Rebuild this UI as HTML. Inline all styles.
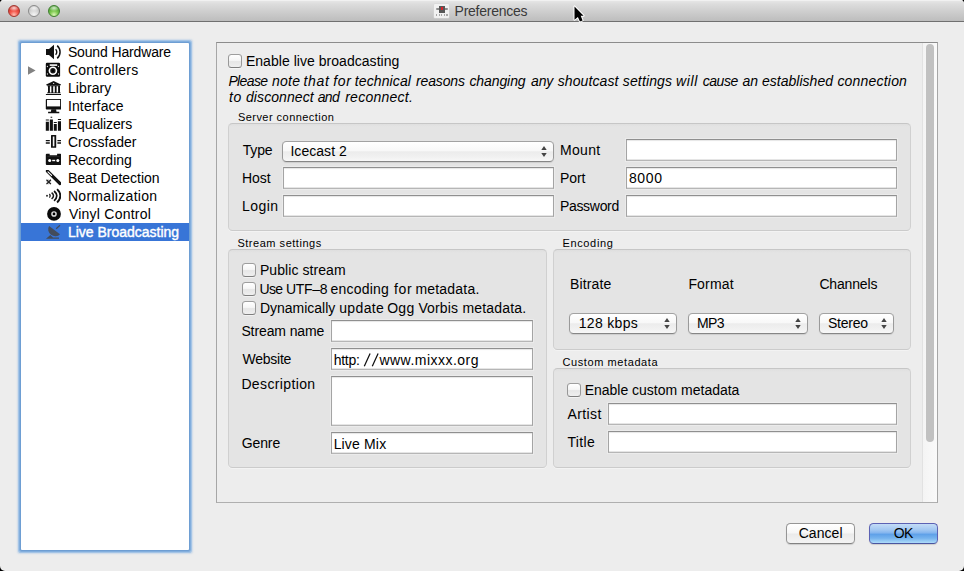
<!DOCTYPE html>
<html>
<head>
<meta charset="utf-8">
<title>Preferences</title>
<style>
html,body{margin:0;padding:0;}
body{width:964px;height:571px;overflow:hidden;background:#000;font-family:"Liberation Sans",sans-serif;font-size:14px;color:#000;}
#win{position:absolute;left:0;top:0;width:964px;height:571px;background:#ededed;border-radius:4px 4px 5px 5px;overflow:hidden;}
#tb{position:absolute;left:0;top:0;width:964px;height:21px;background:linear-gradient(#e9e9e9 0,#dddddd 18%,#cecece 55%,#bdbdbd 100%);border-bottom:1px solid #707070;box-shadow:inset 0 1px 0 #f1f1f1;}
.tl{position:absolute;top:5px;width:12px;height:12px;border-radius:50%;box-sizing:border-box;}
.t{position:absolute;white-space:nowrap;line-height:16px;height:16px;}
.inp{position:absolute;box-sizing:border-box;height:22px;background:#fff;border:1px solid #a4a4a4;border-top-color:#8f8f8f;border-bottom-color:#b6b6b6;box-shadow:inset 0 1px 1px rgba(0,0,0,.10),inset 0 -1px 0 rgba(0,0,0,.10),0 0 0 1px rgba(255,255,255,.25);}
.gb{position:absolute;box-sizing:border-box;background:linear-gradient(#dfdfdf,#e4e4e4 3px,#e4e4e4);border:1px solid #d0d0d0;border-top-color:#c6c6c6;border-bottom-color:#cbcbcb;border-radius:4.5px;box-shadow:0 1px 0 rgba(255,255,255,.35);}
.cb{position:absolute;width:14px;height:14px;box-sizing:border-box;border:1px solid #989898;border-bottom-color:#7e7e7e;border-top-color:#9e9e9e;border-radius:3.5px;background:linear-gradient(#ffffff,#f6f6f6 45%,#e6e6e6 55%,#efefef);box-shadow:0 1px 0 rgba(255,255,255,.5);}
.combo{position:absolute;box-sizing:border-box;height:21px;border:1px solid #9a9a9a;border-top-color:#a2a2a2;border-bottom-color:#868686;border-radius:4.5px;background:linear-gradient(#ffffff,#f8f8f8 45%,#ececec 52%,#f1f1f1 80%,#f8f8f8);box-shadow:0 1px 1px rgba(0,0,0,.10);}
.combo svg{position:absolute;right:6px;top:4px;}
.btn{position:absolute;box-sizing:border-box;height:21px;border:1px solid #959595;border-bottom-color:#828282;border-radius:4.5px;background:linear-gradient(#ffffff,#f6f6f6 48%,#eaeaea 52%,#f4f4f4);box-shadow:0 1px 1px rgba(0,0,0,.14);}
#side{position:absolute;left:21px;top:43px;width:168px;height:507px;background:#fff;border-radius:1px;box-shadow:0 0 0 1px #6e9ed3,0 0 0 2px #82aedd,0 0 0 3px rgba(150,188,228,.75),0 0 1.5px 3.5px rgba(155,190,228,.4);}
.ic{position:absolute;left:45px;width:16px;height:16px;}
</style>
</head>
<body>
<div id="win">
  <div id="tb">
    <div class="tl" style="left:8px;background:radial-gradient(ellipse 55% 32% at 50% 20%,rgba(255,255,255,.8),rgba(255,255,255,0)),radial-gradient(circle at 50% 88%,#ffc0b4 0,#f45a4e 38%,#d5332b 75%,#b8271f 100%);border:1px solid #a2362f;"></div>
    <div class="tl" style="left:28px;background:radial-gradient(ellipse 55% 32% at 50% 20%,rgba(255,255,255,.8),rgba(255,255,255,0)),radial-gradient(circle at 50% 88%,#f6f6f6 0,#d6d6d6 45%,#bebebe 80%,#acacac 100%);border:1px solid #8a8a8a;"></div>
    <div class="tl" style="left:48px;background:radial-gradient(ellipse 55% 32% at 50% 20%,rgba(255,255,255,.75),rgba(255,255,255,0)),radial-gradient(circle at 50% 88%,#dcf7b8 0,#80ca52 38%,#4ea432 75%,#3b8a26 100%);border:1px solid #3f7f30;"></div>
  </div>

  <div id="side"></div>
  <div style="position:absolute;left:21px;top:223px;width:168px;height:18px;background:#3875d7;"></div>
    <!-- sidebar icons: 16x16 at x=45, y=44+18*i -->
  <svg class="ic" style="top:44px" viewBox="0 0 16 16"><path d="M1 5h3l5-4.3v14.6l-5-4.3h-3z" fill="#111"/><path d="M10.6 5.3a3.7 3.7 0 0 1 0 5.4" stroke="#111" stroke-width="1.4" fill="none"/><path d="M12.2 1.6a8.6 8.6 0 0 1 0 12.8" stroke="#111" stroke-width="1.5" fill="none"/></svg>
  <svg style="position:absolute;left:28px;top:66px" width="8" height="9" viewBox="0 0 8 9"><path d="M0 0.2L7.6 4.5L0 8.8Z" fill="#828282"/></svg>
  <svg class="ic" style="top:62px" viewBox="0 0 16 16"><rect x="0.8" y="0.8" width="14.3" height="14" rx="1.2" fill="#0c0c0c"/><rect x="4.7" y="2.3" width="7.5" height="1.6" fill="#fff"/><circle cx="7.9" cy="8.8" r="4.3" fill="#fff"/><circle cx="7.9" cy="8.8" r="2.7" fill="#1a1a1a"/><circle cx="7.9" cy="8.8" r="1.4" fill="#000"/><circle cx="2.4" cy="4.5" r="0.65" fill="#ddd"/><circle cx="2.4" cy="12" r="0.65" fill="#ddd"/><circle cx="13.5" cy="4.5" r="0.65" fill="#ddd"/><circle cx="13.5" cy="12" r="0.65" fill="#ddd"/></svg>
  <svg class="ic" style="top:80px" viewBox="0 0 16 16"><path d="M8.6 0.9L16 4.6V5.3H1.2V4.6Z" fill="#111"/><circle cx="8.6" cy="3.4" r="0.7" fill="#ccc"/><path d="M2.2 5.3h12.8v1h-12.8zM3 6.3h1.9v6.2h-1.9zM6.4 6.3h1.8v6.2h-1.8zM9.8 6.3h1.8v6.2h-1.8zM13.1 6.3h1.9v6.2h-1.9zM2 12.4h13.6v0.9h-13.6zM0.9 14h15.4v1h-15.4z" fill="#111"/></svg>
  <svg class="ic" style="top:98px" viewBox="0 0 16 16"><path d="M0.8 1.7q0-.8.8-.8h13.9q.8 0 .8.8v9q0 .8-.8.8h-13.9q-.8 0-.8-.8z" fill="#111"/><rect x="2" y="1.9" width="13.1" height="6.5" fill="#fff"/><path d="M6.3 11.3h4.8l.4 2.5h2.8v1.4h-11.2v-1.4h2.8z" fill="#111"/></svg>
  <svg class="ic" style="top:116px" viewBox="0 0 16 16"><path d="M0.8 5.7h3.1v9.1h-3.1zM0.8 3.5h3.1v1h-3.1zM4.8 3.5h3.1v11.3h-3.1zM5.6 0.8h1.6v1h-1.6zM8.8 8h3v6.8h-3zM8.8 6h3v1h-3zM12.9 5.3h3.1v9.5h-3.1zM12.9 3h3.1v1h-3.1z" fill="#111"/></svg>
  <svg class="ic" style="top:134px" viewBox="0 0 16 16"><rect x="6" y="1" width="5.2" height="12.8" rx="0.6" fill="#111"/><rect x="7.8" y="2.5" width="1.6" height="9.8" fill="#f4f4f4"/><path d="M0.8 5.9h4v1.4h-4zM0.8 8.3h4v1.4h-4zM12.4 5.9h3.9v1.4h-3.9zM12.4 8.3h3.9v1.4h-3.9z" fill="#111"/></svg>
  <svg class="ic" style="top:152px" viewBox="0 0 16 16"><path d="M0.8 2.7q0-1 1-1h2.9v1.6h7.4v-1.6h3.2q1 0 1 1v9.2q0 1-1 1h-13.5q-1 0-1-1z" fill="#111"/><circle cx="4.7" cy="8.5" r="1.5" fill="#fff"/><circle cx="12.8" cy="8.5" r="1.5" fill="#fff"/><rect x="7.2" y="7.8" width="3" height="1.4" fill="#fff"/><rect x="2.4" y="4.2" width="12.2" height="0.6" fill="#333"/></svg>
  <svg class="ic" style="top:170px" viewBox="0 0 16 16"><path d="M2.4 1.1L15 13.5" stroke="#111" stroke-width="3.2" stroke-linecap="round"/><path d="M3 1.9L6.6 5.4" stroke="#fff" stroke-width="1.1" stroke-linecap="round"/><path d="M1.5 9.7l4.4 4.4M5.9 9.7l-4.4 4.4" stroke="#111" stroke-width="1.25"/><path d="M1.2 11.9h5M3.7 9.4v5" stroke="#444" stroke-width="0.4"/></svg>
  <svg class="ic" style="top:188px" viewBox="0 0 16 16"><circle cx="2" cy="7.8" r="0.95" fill="#222"/><path d="M4.4 6Q6 7.8 4.4 9.6" stroke="#222" stroke-width="1.2" fill="none"/><path d="M6.6 4.6Q10.4 7.8 6.6 11" stroke="#1a1a1a" stroke-width="1.5" fill="none"/><path d="M9.1 3Q14.5 7.8 9.1 12.8" stroke="#111" stroke-width="1.7" fill="none"/><path d="M12.1 1.2Q18.7 7.8 12.1 14.5" stroke="#111" stroke-width="1.9" fill="none"/></svg>
  <svg class="ic" style="top:206px" viewBox="0 0 16 16"><circle cx="9" cy="7.95" r="6.9" fill="#0a0a0a"/><circle cx="9" cy="7.95" r="2.8" fill="#dcdcdc"/><circle cx="9" cy="7.95" r="1.35" fill="#000"/></svg>
  <svg class="ic" style="top:224px" viewBox="0 0 16 16"><path d="M4.1 2.1L15 10.2A6.8 6.1 36 0 1 4.1 2.1Z" fill="#434c5b"/><path d="M11.2 4.7L15 1.3" stroke="#434c5b" stroke-width="1.2"/><path d="M1 14.8L5.3 11L8 13.6H14V14.8Z" fill="#434c5b"/></svg>
  <!-- title icon -->
  <div style="position:absolute;left:434px;top:4px;width:15px;height:14px;background:#f1f1f1;border-radius:1px;box-shadow:0 0 0 0.5px #d5d5d5;"></div>
  <div style="position:absolute;left:436px;top:8px;width:12px;height:2px;background:#8c8c8c;border-radius:1px;"></div>
  <div style="position:absolute;left:439px;top:6px;width:6px;height:6.5px;background:#575757;"></div>
  <div style="position:absolute;left:441px;top:6.7px;width:2px;height:3.6px;background:#d8232a;"></div>
  <div style="position:absolute;left:436px;top:14px;width:12px;height:2px;background:repeating-linear-gradient(90deg,#a8a8a8 0,#a8a8a8 1.2px,#f1f1f1 1.2px,#f1f1f1 2.6px);"></div>
  <!-- mouse cursor -->
  <svg style="position:absolute;left:570px;top:2px" width="20" height="24" viewBox="0 0 20 24"><path d="M4.5 4.4V17.7L7.9 14.9L9.9 19.4L12.6 18.4L10.7 13.7H13.6Z" fill="#000" stroke="#fff" stroke-width="2" stroke-linejoin="round" paint-order="stroke"/></svg>


  <div id="frame" style="position:absolute;left:216px;top:42px;width:722px;height:461px;box-sizing:border-box;border:1px solid #a6a6a6;border-top-color:#8c8c8c;border-bottom-color:#afafaf;"></div>
  <div id="sbtrack" style="position:absolute;left:922px;top:43px;width:15px;height:459px;background:linear-gradient(90deg,#f4f4f4,#fafafa);border-left:1px solid #e2e2e2;box-sizing:border-box;"></div>
  <div id="sbthumb" style="position:absolute;left:926px;top:44px;width:8px;height:398px;background:#c1c1c1;border-radius:4px;"></div>

  <!-- group boxes -->
  <div class="gb" style="left:228px;top:123px;width:683px;height:108px;"></div>
  <div class="gb" style="left:228px;top:249px;width:319px;height:219px;"></div>
  <div class="gb" style="left:553px;top:249px;width:358px;height:101px;"></div>
  <div class="gb" style="left:553px;top:368px;width:358px;height:100px;"></div>

  <!-- checkboxes -->
  <div class="cb" style="left:228px;top:54px;"></div>
  <div class="cb" style="left:242px;top:263px;"></div>
  <div class="cb" style="left:242px;top:282px;"></div>
  <div class="cb" style="left:242px;top:301px;"></div>
  <div class="cb" style="left:567px;top:383px;"></div>

  <!-- inputs -->
  <div class="inp" style="left:283px;top:167px;width:271px;"></div>
  <div class="inp" style="left:283px;top:195px;width:271px;"></div>
  <div class="inp" style="left:626px;top:139px;width:271px;"></div>
  <div class="inp" style="left:626px;top:167px;width:271px;"></div>
  <div class="inp" style="left:626px;top:195px;width:271px;"></div>
  <div class="inp" style="left:331px;top:320px;width:202px;"></div>
  <div class="inp" style="left:331px;top:348px;width:202px;"></div>
  <div class="inp" style="left:331px;top:376px;width:202px;height:50px;"></div>
  <div class="inp" style="left:331px;top:432px;width:202px;"></div>
  <div class="inp" style="left:608px;top:403px;width:289px;"></div>
  <div class="inp" style="left:608px;top:431px;width:289px;"></div>

  <!-- combos -->
  <div class="combo" style="left:282px;top:141px;width:272px;"><svg width="6" height="11" viewBox="0 0 6 11"><path d="M3 0L5.7 4.1H0.3ZM3 11L5.7 6.9H0.3Z" fill="#444"/></svg></div>
  <div class="combo" style="left:569px;top:313px;width:108px;"><svg width="6" height="11" viewBox="0 0 6 11"><path d="M3 0L5.7 4.1H0.3ZM3 11L5.7 6.9H0.3Z" fill="#444"/></svg></div>
  <div class="combo" style="left:688px;top:313px;width:120px;"><svg width="6" height="11" viewBox="0 0 6 11"><path d="M3 0L5.7 4.1H0.3ZM3 11L5.7 6.9H0.3Z" fill="#444"/></svg></div>
  <div class="combo" style="left:819px;top:313px;width:75px;"><svg width="6" height="11" viewBox="0 0 6 11"><path d="M3 0L5.7 4.1H0.3ZM3 11L5.7 6.9H0.3Z" fill="#444"/></svg></div>

  <!-- buttons -->
  <div class="btn" style="left:786px;top:523px;width:69px;"></div>
  <div class="btn" style="left:869px;top:523px;width:69px;border-color:#5c62b4;border-bottom-color:#4a55a0;background:linear-gradient(#c4dcf6,#a3c8f2 30%,#80b3ee 49%,#5c9fe8 52%,#76b3ee 75%,#aedcfa);"></div>

  <svg style="position:absolute;left:360px;top:350px" width="22" height="20" viewBox="0 0 22 20"><path d="M4.3 16.3L10.1 3.6M12.3 16.3L18.1 3.6" stroke="#111" stroke-width="1.25" fill="none"/></svg>
<div class="t" style="left:454.60px;top:3px;letter-spacing:-0.260px;color:#3a3a3a;">Preferences</div>
<div class="t" style="left:67.90px;top:44px;letter-spacing:-0.142px;">Sound Hardware</div>
<div class="t" style="left:67.90px;top:62px;letter-spacing:0.265px;">Controllers</div>
<div class="t" style="left:67.90px;top:80px;letter-spacing:0.108px;">Library</div>
<div class="t" style="left:67.90px;top:98px;letter-spacing:0.144px;">Interface</div>
<div class="t" style="left:67.90px;top:116px;letter-spacing:-0.122px;">Equalizers</div>
<div class="t" style="left:67.90px;top:134px;letter-spacing:0.017px;">Crossfader</div>
<div class="t" style="left:67.90px;top:152px;letter-spacing:0.019px;">Recording</div>
<div class="t" style="left:67.90px;top:170px;letter-spacing:-0.008px;">Beat Detection</div>
<div class="t" style="left:67.90px;top:188px;letter-spacing:0.304px;">Normalization</div>
<div class="t" style="left:68.90px;top:206px;letter-spacing:0.242px;">Vinyl Control</div>
<div class="t" style="left:67.90px;top:224px;letter-spacing:-0.006px;color:#fff;-webkit-text-stroke:0.4px #fff;">Live Broadcasting</div>
<div class="t" style="left:245.90px;top:53px;letter-spacing:0.039px;">Enable live broadcasting</div>
<div class="t" style="left:228.40px;top:73px;letter-spacing:-0.620px;font-style:italic;">Please</div>
<div class="t" style="left:271.90px;top:73px;letter-spacing:0.300px;font-style:italic;">note</div>
<div class="t" style="left:303.57px;top:73px;letter-spacing:0.650px;font-style:italic;">that</div>
<div class="t" style="left:333.25px;top:73px;letter-spacing:0.650px;font-style:italic;">for</div>
<div class="t" style="left:354.80px;top:73px;letter-spacing:0.112px;font-style:italic;">technical</div>
<div class="t" style="left:416.00px;top:73px;letter-spacing:-0.150px;font-style:italic;">reasons</div>
<div class="t" style="left:469.40px;top:73px;letter-spacing:-0.086px;font-style:italic;">changing</div>
<div class="t" style="left:531.00px;top:73px;letter-spacing:-0.150px;font-style:italic;">any</div>
<div class="t" style="left:557.70px;top:73px;letter-spacing:0.112px;font-style:italic;">shoutcast</div>
<div class="t" style="left:622.80px;top:73px;letter-spacing:0.143px;font-style:italic;">settings</div>
<div class="t" style="left:676.02px;top:73px;letter-spacing:0.650px;font-style:italic;">will</div>
<div class="t" style="left:702.70px;top:73px;letter-spacing:-0.450px;font-style:italic;">cause</div>
<div class="t" style="left:742.40px;top:73px;letter-spacing:0.100px;font-style:italic;">an</div>
<div class="t" style="left:761.90px;top:73px;letter-spacing:0.030px;font-style:italic;">established</div>
<div class="t" style="left:837.40px;top:73px;letter-spacing:0.200px;font-style:italic;">connection</div>
<div class="t" style="left:229.07px;top:89px;letter-spacing:0.650px;font-style:italic;">to</div>
<div class="t" style="left:246.00px;top:89px;letter-spacing:0.078px;font-style:italic;">disconnect</div>
<div class="t" style="left:317.65px;top:89px;letter-spacing:-0.650px;font-style:italic;">and</div>
<div class="t" style="left:345.20px;top:89px;letter-spacing:0.256px;font-style:italic;">reconnect.</div>
<div class="t" style="left:237.90px;top:109px;letter-spacing:0.463px;font-size:11px;">Server connection</div>
<div class="t" style="left:242.65px;top:142px;letter-spacing:-0.117px;">Type</div>
<div class="t" style="left:290.40px;top:143px;letter-spacing:0.050px;">Icecast 2</div>
<div class="t" style="left:559.90px;top:142px;letter-spacing:0.350px;">Mount</div>
<div class="t" style="left:241.90px;top:170px;letter-spacing:-0.033px;">Host</div>
<div class="t" style="left:559.90px;top:170px;letter-spacing:-0.033px;">Port</div>
<div class="t" style="left:628.90px;top:170px;letter-spacing:0.633px;">8000</div>
<div class="t" style="left:241.90px;top:198px;letter-spacing:0.475px;">Login</div>
<div class="t" style="left:559.90px;top:198px;letter-spacing:-0.300px;">Password</div>
<div class="t" style="left:237.40px;top:235px;letter-spacing:0.529px;font-size:11px;">Stream settings</div>
<div class="t" style="left:562.45px;top:235px;letter-spacing:0.650px;font-size:11px;">Encoding</div>
<div class="t" style="left:259.90px;top:262px;letter-spacing:0.075px;">Public stream</div>
<div class="t" style="left:259.50px;top:281px;letter-spacing:-0.650px;">Use</div>
<div class="t" style="left:285.90px;top:281px;letter-spacing:-0.275px;">UTF–8</div>
<div class="t" style="left:330.40px;top:281px;letter-spacing:0.236px;">encoding</div>
<div class="t" style="left:393.95px;top:281px;letter-spacing:0.650px;">for</div>
<div class="t" style="left:415.40px;top:281px;letter-spacing:0.206px;">metadata.</div>
<div class="t" style="left:259.90px;top:300px;letter-spacing:-0.010px;">Dynamically</div>
<div class="t" style="left:339.15px;top:300px;letter-spacing:0.380px;">update</div>
<div class="t" style="left:387.15px;top:300px;letter-spacing:0.325px;">Ogg</div>
<div class="t" style="left:418.40px;top:300px;letter-spacing:0.130px;">Vorbis</div>
<div class="t" style="left:462.40px;top:300px;letter-spacing:0.175px;">metadata.</div>
<div class="t" style="left:241.40px;top:323px;letter-spacing:-0.110px;">Stream name</div>
<div class="t" style="left:242.40px;top:351px;letter-spacing:-0.225px;">Website</div>
<div class="t" style="left:333.80px;top:352px;letter-spacing:-0.300px;">http:</div>
<div class="t" style="left:379.40px;top:352px;letter-spacing:0.483px;">www.mixxx.org</div>
<div class="t" style="left:241.40px;top:376px;letter-spacing:0.365px;">Description</div>
<div class="t" style="left:241.65px;top:435px;letter-spacing:-0.088px;">Genre</div>
<div class="t" style="left:333.65px;top:436px;letter-spacing:0.164px;">Live Mix</div>
<div class="t" style="left:569.90px;top:276px;letter-spacing:0.150px;">Bitrate</div>
<div class="t" style="left:688.40px;top:276px;letter-spacing:0.180px;">Format</div>
<div class="t" style="left:819.40px;top:276px;letter-spacing:-0.157px;">Channels</div>
<div class="t" style="left:578.65px;top:315px;letter-spacing:0.343px;">128 kbps</div>
<div class="t" style="left:697.10px;top:315px;letter-spacing:-0.650px;">MP3</div>
<div class="t" style="left:828.00px;top:315px;letter-spacing:-0.240px;">Stereo</div>
<div class="t" style="left:562.40px;top:354px;letter-spacing:0.600px;font-size:11px;">Custom metadata</div>
<div class="t" style="left:584.65px;top:382px;letter-spacing:-0.005px;">Enable custom metadata</div>
<div class="t" style="left:567.40px;top:406px;letter-spacing:0.430px;">Artist</div>
<div class="t" style="left:567.40px;top:434px;letter-spacing:0.350px;">Title</div>
<div class="t" style="left:798.70px;top:525px;letter-spacing:0.060px;">Cancel</div>
<div class="t" style="left:893.70px;top:525px;letter-spacing:-0.600px;">OK</div>
</div>
</body>
</html>
